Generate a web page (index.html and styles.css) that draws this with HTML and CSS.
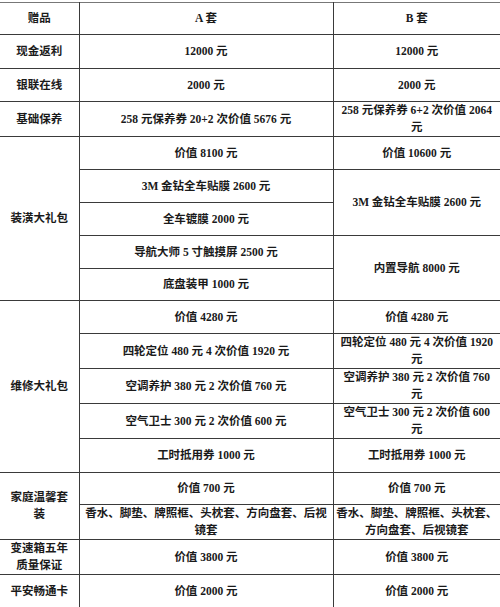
FILE: index.html
```html
<!DOCTYPE html>
<html lang="zh">
<head>
<meta charset="utf-8">
<title>赠品</title>
<link rel="stylesheet" href="styles.css">
</head>
<body>
<table class="gifts">
  <colgroup>
    <col class="c1">
    <col class="c2">
    <col class="c3">
  </colgroup>
  <tr class="h32"><td>赠品</td><td>A 套</td><td>B 套</td></tr>
  <tr class="h34"><td>现金返利</td><td>12000 元</td><td>12000 元</td></tr>
  <tr class="h33"><td>银联在线</td><td>2000 元</td><td>2000 元</td></tr>
  <tr class="h34"><td>基础保养</td><td>258 元保养券 20+2 次价值 5676 元</td><td>258 元保养券 6+2 次价值 2064<br>元</td></tr>
  <tr class="h33"><td rowspan="5">装潢大礼包</td><td>价值 8100 元</td><td>价值 10600 元</td></tr>
  <tr class="h33"><td>3M 金钻全车贴膜 2600 元</td><td rowspan="2">3M 金钻全车贴膜 2600 元</td></tr>
  <tr class="h33"><td>全车镀膜 2000 元</td></tr>
  <tr class="h33"><td>导航大师 5 寸触摸屏 2500 元</td><td rowspan="2">内置导航 8000 元</td></tr>
  <tr class="h32"><td>底盘装甲 1000 元</td></tr>
  <tr class="h33"><td rowspan="5">维修大礼包</td><td>价值 4280 元</td><td>价值 4280 元</td></tr>
  <tr class="h35"><td>四轮定位 480 元 4 次价值 1920 元</td><td>四轮定位 480 元 4 次价值 1920<br>元</td></tr>
  <tr class="h34"><td>空调养护 380 元 2 次价值 760 元</td><td>空调养护 380 元 2 次价值 760<br>元</td></tr>
  <tr class="h34"><td>空气卫士 300 元 2 次价值 600 元</td><td>空气卫士 300 元 2 次价值 600<br>元</td></tr>
  <tr class="h34"><td>工时抵用券 1000 元</td><td>工时抵用券 1000 元</td></tr>
  <tr class="h32"><td rowspan="2">家庭温馨套<br>装</td><td>价值 700 元</td><td>价值 700 元</td></tr>
  <tr class="h35"><td>香水、脚垫、牌照框、头枕套、方向盘套、后视<br>镜套</td><td>香水、脚垫、牌照框、头枕套、<br>方向盘套、后视镜套</td></tr>
  <tr class="h34"><td>变速箱五年<br>质量保证</td><td>价值 3800 元</td><td>价值 3800 元</td></tr>
  <tr class="h33"><td>平安畅通卡</td><td>价值 2000 元</td><td>价值 2000 元</td></tr>
</table>
</body>
</html>
```

FILE: styles.css
```css
html, body {
  margin: 0;
  padding: 0;
  background: #ffffff;
}

body {
  padding-top: 2px;
  font-family: "Liberation Serif", "Noto Sans CJK SC", serif;
  font-size: 11.5px;
  font-weight: bold;
  color: #1a1a1a;
}

.gifts {
  width: 500px;
  table-layout: fixed;
  border-collapse: collapse;
}

.c1 { width: 79px; }
.c2 { width: 254px; }
.c3 { width: 167px; }

.gifts td {
  border: 1px solid #3a3a3a;
  text-align: center;
  vertical-align: middle;
  padding: 0 2px;
  line-height: 17px;
  white-space: nowrap;
}

.gifts tr td:first-child { border-left: none; }
.gifts tr td:last-child { border-right: none; }
.gifts tr:first-child td { border-top-color: #777777; }

.h32 { height: 32px; }
.h33 { height: 33px; }
.h34 { height: 34px; }
.h35 { height: 35px; }
```
